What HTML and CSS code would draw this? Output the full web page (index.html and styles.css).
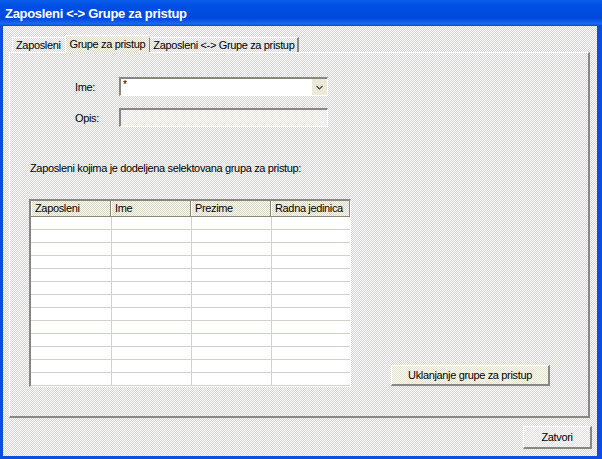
FILE: index.html
```html
<!DOCTYPE html>
<html>
<head>
<meta charset="utf-8">
<link rel="stylesheet" href="styles.css">
</head>
<body>
<div class="window">
  <div class="titlebar">Zaposleni &lt;-&gt; Grupe za pristup</div>
  <div class="client">
    <div class="tabs">
      <div class="tab first">Zaposleni</div>
      <div class="tab active">Grupe za pristup</div>
      <div class="tab last">Zaposleni &lt;-&gt; Grupe za pristup</div>
    </div>
    <div class="panel">
      <div class="form">
        <div class="row">
          <span class="lbl">Ime:</span>
          <div class="combo"><span class="val">*</span><span class="dd"><svg width="7" height="5" viewBox="0 0 7 5"><path d="M0.5 1 L3.5 4 L6.5 1" fill="none" stroke="#444" stroke-width="1.2"/></svg></span></div>
        </div>
        <div class="row">
          <span class="lbl">Opis:</span>
          <div class="textbox"></div>
        </div>
      </div>
      <div class="caption">Zaposleni kojima je dodeljena selektovana grupa za pristup:</div>
      <div class="bottom">
        <div class="grid">
          <div class="head">
            <div class="hc">Zaposleni</div>
            <div class="hc">Ime</div>
            <div class="hc">Prezime</div>
            <div class="hc">Radna jedinica</div>
          </div>
          <div class="body"></div>
        </div>
        <button class="btn remove">Uklanjanje grupe za pristup</button>
      </div>
    </div>
    <div class="footer">
      <button class="btn close">Zatvori</button>
    </div>
  </div>
</div>
</body>
</html>
```
FILE: styles.css
```css
html, body {
  margin: 0;
  padding: 0;
}
body {
  width: 602px;
  height: 459px;
  overflow: hidden;
  font-family: "Liberation Sans", Arial, sans-serif;
  font-size: 11px;
  letter-spacing: -0.35px;
  color: #000;
}
.window {
  width: 602px;
  height: 459px;
  background: #0a4ee0;
  display: flex;
  flex-direction: column;
  box-sizing: border-box;
}
.titlebar {
  height: 26px;
  flex: none;
  box-sizing: border-box;
  padding: 6px 0 0 5px;
  color: #fff;
  font-family: "Liberation Sans", Arial, sans-serif;
  font-weight: bold;
  font-size: 13px;
  letter-spacing: -0.3px;
  background: linear-gradient(to bottom, #0a5ee8 0%, #0050e6 20%, #0048dc 70%, #1a6af0 92%, #0046d6 100%);
}
.client {
  flex: 1;
  margin: 0 5px 3px 3px;
  background-color: #f4f2ea;
  background-image: repeating-conic-gradient(#ffffff 0 25%, #d9d5c6 0 50%);
  background-size: 2px 2px;
  display: flex;
  flex-direction: column;
  padding: 9px 8px 0 6px;
  box-sizing: border-box;
}
.tabs {
  display: flex;
  height: 17px;
  align-items: flex-end;
  padding-left: 3px;
}
.tab {
  height: 15px;
  box-sizing: border-box;
  padding: 1px 4px 0 4px;
}
.tab.first {
  border-left: 1px solid #fff;
  border-top: 1px solid #fff;
  padding-left: 3px;
}
.tab.last {
  border-left: 1px solid #8a877c;
  border-right: 2px solid #8a877c;
  border-top: 1px solid #fff;
  padding: 1px 3px 0 3px;
}
.tab.active {
  height: 18px;
  padding-top: 2px;
  border-top: 1px solid #fff;
  border-left: 1px solid #fff;
  margin-bottom: -1px;
  position: relative;
  z-index: 1;
  background-color: #f4f2ea;
  background-image: repeating-conic-gradient(#ffffff 0 25%, #d9d5c6 0 50%);
  background-size: 2px 2px;
}
.panel {
  height: 366px;
  box-sizing: border-box;
  border-top: 1px solid #fff;
  border-left: 1px solid #fff;
  border-right: 2px solid #8a877c;
  border-bottom: 2px solid #8a877c;
  width: 581px;
  display: flex;
  flex-direction: column;
}
.form {
  padding: 24px 0 0 62px;
  display: flex;
  flex-direction: column;
  gap: 12px;
}
.row {
  display: flex;
  align-items: center;
}
.lbl {
  width: 47px;
  text-align: left;
  padding-left: 3px;
  box-sizing: border-box;
}
.combo, .textbox {
  width: 209px;
  height: 19px;
  box-sizing: border-box;
  border-top: 2px solid #8a877c;
  border-left: 2px solid #8a877c;
  border-right: 1px solid #fff;
  border-bottom: 1px solid #fff;
}
.combo {
  background: #fff;
  display: flex;
  align-items: stretch;
}
.combo .val {
  flex: 1;
  padding: 0 0 0 2px;
  font-size: 10px;
  line-height: 12px;
}
.dd {
  width: 15px;
  background: #ece9d8;
  border-left: 1px solid #fff;
  display: flex;
  align-items: center;
  justify-content: center;
}
.textbox {
  background-color: #efede4;
  background-image: repeating-conic-gradient(#ffffff 0 25%, #e8e4da 0 50%);
  background-size: 2px 2px;
}
.caption {
  margin: 35px 0 0 20px;
}
.bottom {
  display: flex;
  align-items: flex-end;
  margin: 25px 0 0 19px;
}
.grid {
  width: 322px;
  height: 188px;
  box-sizing: border-box;
  border-left: 2px solid #8a877c;
  border-top: 2px solid #8a877c;
  border-right: 1px solid #fff;
  border-bottom: 1px solid #fff;
  display: flex;
  flex-direction: column;
}
.head {
  display: grid;
  grid-template-columns: 80px 80px 80px 1fr;
  height: 15px;
  background-color: #f4f2ea;
  background-image: repeating-conic-gradient(#ffffff 0 25%, #d9d5c6 0 50%);
  background-size: 2px 2px;
  border-bottom: 1px solid #8a877c;
}
.hc {
  padding: 1px 0 0 3px;
  border-right: 1px solid #8a877c;
  border-left: 1px solid #fff;
  white-space: nowrap;
  overflow: hidden;
}
.body {
  flex: 1;
  background-color: #fff;
  background-image:
    repeating-linear-gradient(to bottom, transparent 0 12px, #d3d1c8 12px 13px),
    linear-gradient(to right, transparent 80px, #d3d1c8 80px 81px, transparent 81px 160px, #d3d1c8 160px 161px, transparent 161px 240px, #d3d1c8 240px 241px, transparent 241px);
}
.btn {
  font-family: inherit;
  font-size: 11px;
  letter-spacing: -0.35px;
  color: #000;
  background-color: #f4f2ea;
  background-image: repeating-conic-gradient(#ffffff 0 25%, #e2ded0 0 50%);
  background-size: 2px 2px;
  border-top: 1px solid #fff;
  border-left: 1px solid #fff;
  border-right: 2px solid #8a877c;
  border-bottom: 2px solid #8a877c;
  padding: 0;
  margin: 0;
}
.remove {
  width: 159px;
  height: 21px;
  margin: 0 0 1px 40px;
}
.footer {
  display: flex;
  justify-content: flex-end;
  padding: 8px 0 0 0;
  margin-right: -3px;
}
.close {
  width: 69px;
  height: 23px;
}
```
